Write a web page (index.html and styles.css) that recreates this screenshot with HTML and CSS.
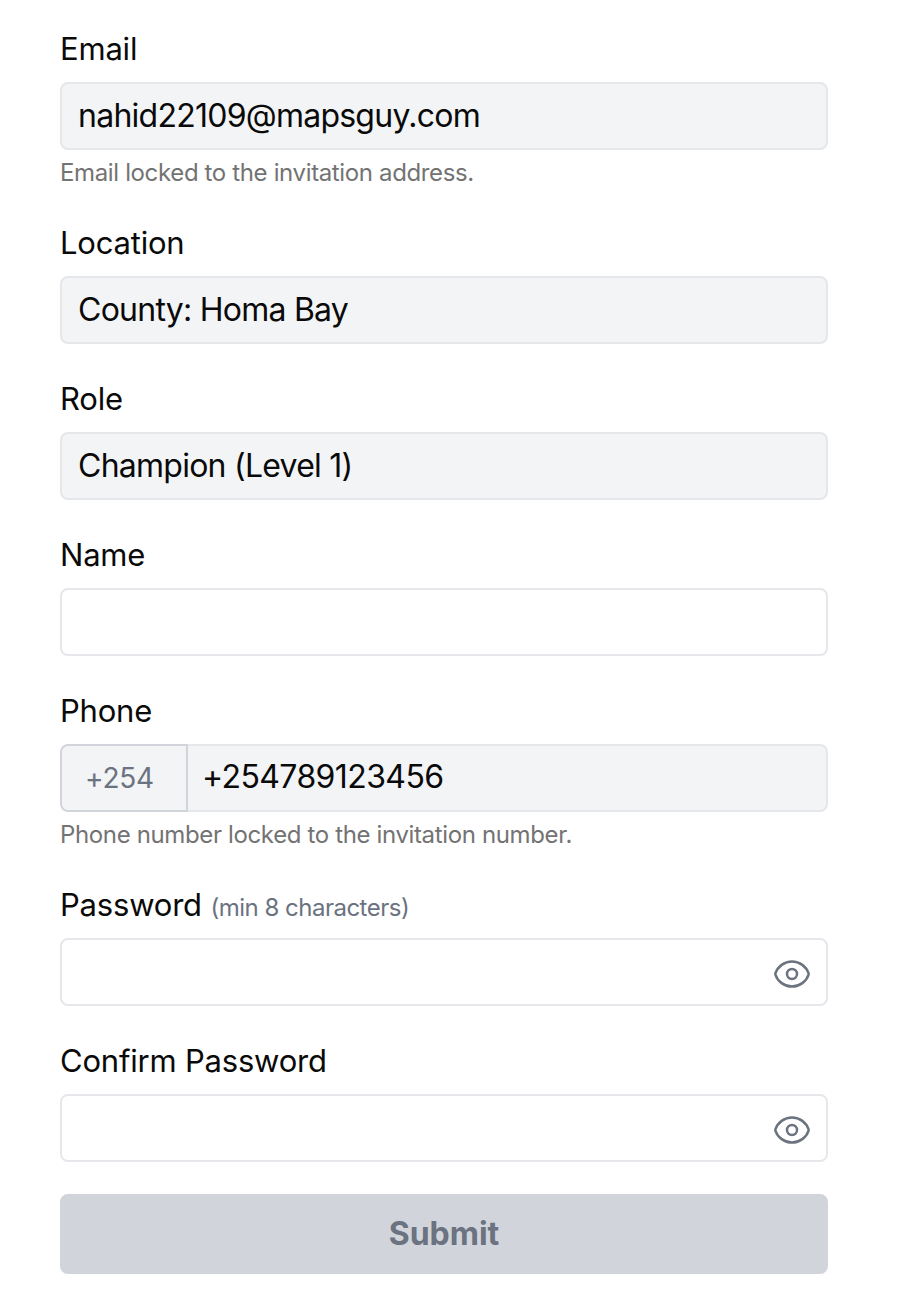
FILE: index.html
```html
<!DOCTYPE html>
<html lang="en">
<head>
  <meta charset="UTF-8" />
  <meta name="viewport" content="width=device-width, initial-scale=1.0"/>
  <title>Complete registration</title>
  <link rel="stylesheet" href="styles.css">
</head>
<body>
  <form class="signup-form">
    <div class="field">
      <label class="field-label" for="email">Email</label>
      <input class="text-input locked" id="email" type="text" value="nahid22109@mapsguy.com" readonly />
      <p class="hint">Email locked to the invitation address.</p>
    </div>

    <div class="field">
      <label class="field-label" for="location">Location</label>
      <input class="text-input locked" id="location" type="text" value="County: Homa Bay" readonly />
    </div>

    <div class="field">
      <label class="field-label" for="role">Role</label>
      <input class="text-input locked" id="role" type="text" value="Champion (Level 1)" readonly />
    </div>

    <div class="field">
      <label class="field-label" for="name">Name</label>
      <input class="text-input" id="name" type="text" />
    </div>

    <div class="field">
      <label class="field-label" for="phone">Phone</label>
      <div class="phone-group">
        <span class="phone-prefix">+254</span>
        <input class="phone-input" id="phone" type="text" value="+254789123456" readonly />
      </div>
      <p class="hint">Phone number locked to the invitation number.</p>
    </div>

    <div class="field">
      <label class="field-label" for="password">Password <span class="label-note">(min 8 characters)</span></label>
      <div class="password-wrap">
        <input class="text-input" id="password" type="password" />
        <button class="eye-btn" type="button" aria-label="Show password">
          <svg viewBox="0 0 24 24" width="40" height="40" fill="none" stroke="currentColor" stroke-width="1.5" stroke-linecap="round" stroke-linejoin="round">
            <path d="M2.04 12.32a1 1 0 0 1 0-.64C3.42 7.51 7.36 4.5 12 4.5c4.64 0 8.57 3.01 9.96 7.18.07.21.07.43 0 .64C20.58 16.49 16.64 19.5 12 19.5c-4.64 0-8.57-3.01-9.96-7.18Z"/>
            <path d="M15 12a3 3 0 1 1-6 0 3 3 0 0 1 6 0Z"/>
          </svg>
        </button>
      </div>
    </div>

    <div class="field">
      <label class="field-label" for="confirm">Confirm Password</label>
      <div class="password-wrap">
        <input class="text-input" id="confirm" type="password" />
        <button class="eye-btn" type="button" aria-label="Show password">
          <svg viewBox="0 0 24 24" width="40" height="40" fill="none" stroke="currentColor" stroke-width="1.5" stroke-linecap="round" stroke-linejoin="round">
            <path d="M2.04 12.32a1 1 0 0 1 0-.64C3.42 7.51 7.36 4.5 12 4.5c4.64 0 8.57 3.01 9.96 7.18.07.21.07.43 0 .64C20.58 16.49 16.64 19.5 12 19.5c-4.64 0-8.57-3.01-9.96-7.18Z"/>
            <path d="M15 12a3 3 0 1 1-6 0 3 3 0 0 1 6 0Z"/>
          </svg>
        </button>
      </div>
    </div>

    <button class="submit-btn" type="button" disabled>Submit</button>
  </form>
</body>
</html>
```

FILE: styles.css
```css
* {
  box-sizing: border-box;
}
body {
  margin: 0;
  background-color: #fff;
  font-family: Inter, "Liberation Sans", sans-serif;
  color: #0a0a0a;
}
.signup-form {
  width: 768px;
  margin-left: 60px;
  padding-top: 29px;
}
.field {
  margin-bottom: 35px;
}
.field-label {
  display: block;
  height: 40px;
  margin-bottom: 13px;
  font-size: 31px;
  line-height: 40px;
  letter-spacing: -0.2px;
}
.label-note {
  font-size: 24px;
  letter-spacing: -0.5px;
  color: #6b7280;
}
.text-input {
  display: block;
  width: 100%;
  height: 68px;
  padding: 0 16px 2px;
  border: 2px solid #e5e7eb;
  border-radius: 8px;
  background-color: #fff;
  font-family: inherit;
  font-size: 32px;
  letter-spacing: -0.75px;
  color: #0a0a0a;
  outline: none;
}
.locked {
  background-color: #f3f4f6;
}
.hint {
  margin: 9px 0 0;
  padding-bottom: 2px;
  font-size: 24px;
  line-height: 27px;
  letter-spacing: -0.36px;
  color: #737373;
}
.phone-group {
  display: flex;
  height: 68px;
}
.phone-prefix {
  display: flex;
  align-items: center;
  width: 128px;
  padding-left: 23px;
  padding-bottom: 1px;
  border: 2px solid #d1d5db;
  border-radius: 8px 0 0 8px;
  background-color: #f3f4f6;
  font-size: 28px;
  letter-spacing: -0.2px;
  color: #6b7280;
}
.phone-input {
  flex: 1;
  min-width: 0;
  padding: 0 14px 3px;
  border: 2px solid #e5e7eb;
  border-left: none;
  border-radius: 0 8px 8px 0;
  background-color: #f3f4f6;
  font-family: inherit;
  font-size: 32px;
  letter-spacing: -0.6px;
  color: #0a0a0a;
  outline: none;
}
.password-wrap {
  position: relative;
}
.eye-btn {
  position: absolute;
  top: 16px;
  right: 16px;
  padding: 0;
  border: none;
  background: none;
  color: #6b7280;
  line-height: 0;
}
.submit-btn {
  display: block;
  width: 100%;
  height: 80px;
  margin-top: -3px;
  padding-bottom: 2px;
  border: none;
  border-radius: 8px;
  background-color: #d1d5db;
  font-family: inherit;
  font-size: 32px;
  font-weight: 700;
  color: #6b7280;
}
```
